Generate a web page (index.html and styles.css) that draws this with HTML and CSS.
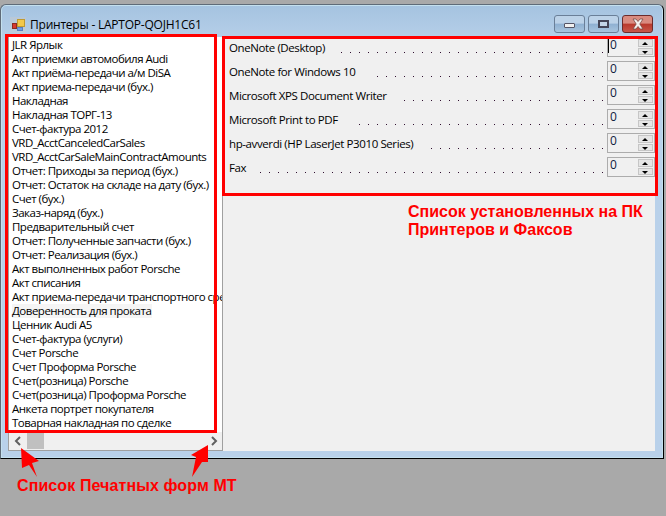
FILE: index.html
```html
<!DOCTYPE html>
<html lang="ru">
<head>
<meta charset="utf-8">
<title>Принтеры</title>
<link rel="stylesheet" href="styles.css">
</head>
<body>
<div class="window">
  <div class="titlebar">
    <svg class="app-icon" width="16" height="16" viewBox="0 0 16 16"><rect x="0" y="0" width="16" height="16" fill="#c9c9c9" opacity=".45"/><rect x="7.500" y="2.500" width="7" height="7" fill="#f3c84a" stroke="#c09a30"/><rect x="2.500" y="6.500" width="4" height="5" fill="#d8382e" stroke="#8c2a22"/><rect x="7.500" y="10.500" width="5" height="3" fill="#6f9fe4" stroke="#5a80c0"/></svg>
    <span class="title">Принтеры - LAPTOP-QOJH1C61</span>
    <div class="controls">
      <div class="ctl"><span class="ico-min"></span></div>
      <div class="ctl"><span class="ico-max"></span></div>
      <div class="ctl close"><svg width="16" height="12" viewBox="0 0 16 12"><path d="M3 1h3l2 2.500L10 1h3L9.800 6 13 11h-3L8 8.500 6 11H3l3.200-5z" fill="#f4f0ee" stroke="#7a4a44" stroke-width=".8"/></svg></div>
    </div>
  </div>
  <div class="client">
    <div class="left">
      <ul class="forms">
        <li>JLR Ярлык</li>
        <li>Акт приемки автомобиля Audi</li>
        <li>Акт приёма-передачи а/м DiSA</li>
        <li>Акт приема-передачи (бух.)</li>
        <li>Накладная</li>
        <li>Накладная ТОРГ-13</li>
        <li>Счет-фактура 2012</li>
        <li>VRD_AcctCanceledCarSales</li>
        <li>VRD_AcctCarSaleMainContractAmounts</li>
        <li>Отчет: Приходы за период (бух.)</li>
        <li>Отчет: Остаток на складе на дату (бух.)</li>
        <li>Счет (бух.)</li>
        <li>Заказ-наряд (бух.)</li>
        <li>Предварительный счет</li>
        <li>Отчет: Полученные запчасти (бух.)</li>
        <li>Отчет: Реализация (бух.)</li>
        <li>Акт выполненных работ Porsche</li>
        <li>Акт списания</li>
        <li>Акт приема-передачи транспортного средства</li>
        <li><span class="hl">Доверенность для проката</span></li>
        <li>Ценник Audi A5</li>
        <li>Счет-фактура (услуги)</li>
        <li>Счет Porsche</li>
        <li>Счет Проформа Porsche</li>
        <li>Счет(розница) Porsche</li>
        <li>Счет(розница) Проформа Porsche</li>
        <li>Анкета портрет покупателя</li>
        <li>Товарная накладная по сделке</li>
      </ul>
      <div class="hscroll">
        <svg width="9" height="10" viewBox="0 0 9 10"><path d="M6 1 2 5l4 4" fill="none" stroke="#606060" stroke-width="2"/></svg>
        <div class="thumb"></div>
        <svg class="arrow-right" width="9" height="10" viewBox="0 0 9 10"><path d="M3 1l4 4-4 4" fill="none" stroke="#606060" stroke-width="2"/></svg>
      </div>
    </div>
    <div class="right">
      <div class="printers">
        <div class="row"><span class="name">OneNote (Desktop)</span><span class="dots"></span><div class="spin"><span class="val active">0</span><div class="btns"><b class="up"></b><b class="down"></b></div></div></div>
        <div class="row"><span class="name">OneNote for Windows 10</span><span class="dots"></span><div class="spin"><span class="val">0</span><div class="btns"><b class="up"></b><b class="down"></b></div></div></div>
        <div class="row"><span class="name">Microsoft XPS Document Writer</span><span class="dots"></span><div class="spin"><span class="val">0</span><div class="btns"><b class="up"></b><b class="down"></b></div></div></div>
        <div class="row"><span class="name">Microsoft Print to PDF</span><span class="dots"></span><div class="spin"><span class="val">0</span><div class="btns"><b class="up"></b><b class="down"></b></div></div></div>
        <div class="row"><span class="name">hp-avverdi (HP LaserJet P3010 Series)</span><span class="dots"></span><div class="spin"><span class="val">0</span><div class="btns"><b class="up"></b><b class="down"></b></div></div></div>
        <div class="row"><span class="name">Fax</span><span class="dots"></span><div class="spin"><span class="val">0</span><div class="btns"><b class="up"></b><b class="down"></b></div></div></div>
      </div>
    </div>
  </div>
</div>
<div class="box box-forms"></div>
<div class="box box-printers"></div>
<p class="note note-printers">Список установленных на ПК<br>Принтеров и Факсов</p>
<p class="note note-forms">Список Печатных форм МТ</p>
<svg class="arrow arrow-a" width="20" height="30" viewBox="0 0 20 30"><path d="M0 0 18 13l-7 2 5 14-8-12-7 3z" fill="#f00"/></svg>
<svg class="arrow arrow-b" width="18" height="33" viewBox="0 0 18 33"><path d="M17 0 0 10l5 2-4 20 10-15 6 0z" fill="#f00"/></svg>
</body>
</html>
```
FILE: styles.css
```css
* { box-sizing: border-box; }
html, body { margin: 0; height: 516px; overflow: hidden; }
body { background: #a9a9a9; position: relative; padding-top: 4px; font-family: "Open Sans", "Noto Sans", sans-serif; font-size: 11.5px; letter-spacing: -.4px; color: #000; }
.window { width: 664px; height: 455px; border: 1px solid #000; border-left-color: #5f6b78; border-top-color: #5f6b78; border-radius: 6px 6px 0 0; background: linear-gradient(#a5c3e0, #b9d1ea 40px); padding: 0 8px 7px 7px; box-shadow: inset 0 0 0 1px #c4e0ee; display: flex; flex-direction: column; }
.titlebar { height: 32px; flex: none; display: flex; align-items: flex-start; }
.app-icon { margin: 12px 4px 0 2px; }
.title { font-size: 12px; letter-spacing: -.22px; line-height: 14px; margin-top: 13px; }
.controls { margin-left: auto; display: flex; gap: 3px; margin-top: 10px; margin-right: 2px; }
.ctl { width: 31px; height: 18px; border: 1px solid #6a7f98; border-radius: 3px; background: linear-gradient(#bcd2e8 0 45%, #8fb0d2 50%, #a8c4de); display: flex; align-items: center; justify-content: center; }
.ctl.close { border-color: #6b2b2b; background: linear-gradient(#d98b80 0 45%, #b8392c 50%, #c9564a); }
.ico-min { width: 11px; height: 5px; background: #f0f0f0; border: 1px solid #556; border-radius: 1px; margin-top: 3px; }
.ico-max { width: 11px; height: 8px; background: #c4d4e6; border: 2px solid #445; }
.client { flex: 1; background: #f0f0f0; display: flex; min-height: 0; }
.left { width: 215px; flex: none; display: flex; flex-direction: column; border: 1px solid #a0a0a0; border-top: 0; }
.forms { list-style: none; margin: 0; padding: 1px 0 0 3px; flex: 1; background: #fff; overflow: hidden; white-space: nowrap; letter-spacing: -.5px; }
.forms li { height: 14px; line-height: 14px; }
.hl { background: #f5f5f5; display: inline-block; padding-right: 1px; }
.hscroll { height: 18px; flex: none; display: flex; align-items: center; background: #f0f0f0; padding: 0 4px 0 5px; }
.thumb { width: 17px; height: 16px; background: #c0c0c0; margin-left: 4px; }
.arrow-right { margin-left: auto; }
.right { flex: 1; min-width: 0; padding-left: 6px; }
.printers { display: flex; flex-direction: column; gap: 4px; }
.row { height: 20px; display: flex; align-items: flex-start; }
.name { padding-top: 4px; line-height: 14px; flex: none; }
.dots { flex: 1; height: 1px; margin: 15px 0 0 14px; background: repeating-linear-gradient(to left, transparent 0 4px, #301030 4px 5px, transparent 5px 9px); }
.spin { width: 48px; height: 20px; border: 1px solid #acacac; display: flex; justify-content: space-between; flex: none; }
.val { font-size: 12px; line-height: 13px; padding-left: 2px; color: #102040; }
.val.active { box-shadow: inset 1px 0 0 #000; height: 15px; }
.btns { width: 15px; display: flex; flex-direction: column; gap: 1px; margin: 1px; }
.btns b { flex: 1; background: #e6e6e6; border: 1px solid #c6c6c6; position: relative; }
.btns b::after { content: ""; position: absolute; left: 3px; top: 2px; border: 3px solid transparent; border-top: 0; border-bottom: 3px solid #000; }
.btns b.down::after { border-bottom: 0; border-top: 3px solid #000; }
.box { position: absolute; border: 3px solid #f00; }
.box-forms { left: 5px; top: 34px; width: 212px; height: 399px; }
.box-printers { left: 222px; top: 36px; width: 436px; height: 160px; }
.note { position: absolute; margin: 0; color: #f00; font-family: "Liberation Sans", sans-serif; font-weight: 700; font-size: 16px; line-height: 18px; letter-spacing: 0; }
.note-printers { left: 408px; top: 203px; }
.note-forms { left: 17px; top: 477px; letter-spacing: .1px; }
.arrow { position: absolute; }
.arrow-a { left: 21px; top: 448px; }
.arrow-b { left: 191px; top: 445px; }
```
